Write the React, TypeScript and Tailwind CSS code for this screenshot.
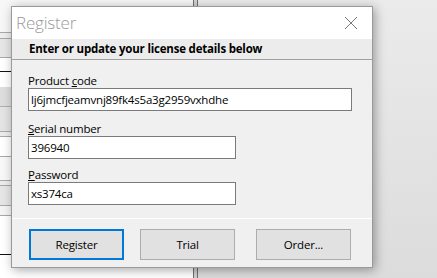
import { ReactNode } from "react";

// background rows of the window behind the dialog (left strip)
const bgRows = [
  { h: 33, cls: "bg-[#f7f7f7] border-b border-[#a8a8a8]" },
  { h: 6, cls: "bg-[#ededed] border-b border-[#a8a8a8]" },
  { h: 19, cls: "bg-[#e6e6e6] border-b border-[#a8a8a8]" },
  { h: 14, cls: "bg-white border-b border-[#111]" },
  { h: 15, cls: "bg-white" },
  { h: 20, cls: "bg-[#dedede] border-b border-[#b0b0b0]" },
  { h: 25, cls: "bg-[#e4e4e4] border-b border-[#a8a8a8]" },
  { h: 5, cls: "bg-[#ececec] border-b border-[#a8a8a8]" },
  { h: 20, cls: "bg-white border-b border-[#a8a8a8]" },
  { h: 24, cls: "bg-[#f8f8f8] border-b border-[#a8a8a8]" },
  { h: 5, cls: "bg-[#ececec] border-b border-[#a8a8a8]" },
  { h: 20, cls: "bg-[#e6e6e6] border-b border-[#a8a8a8]" },
  { h: 10, cls: "bg-[#f4f4f4] border-b border-[#a8a8a8]" },
  { h: 21, cls: "bg-white" },
  { h: 18, cls: "bg-white border-b border-[#111]" },
];

function Field({
  label,
  value,
  wide,
  className,
}: {
  label: ReactNode;
  value: string;
  wide?: boolean;
  className?: string;
}) {
  return (
    <div className={className}>
      <div className="h-[15px] leading-[15px] text-[11.5px] tracking-[-0.2px] text-black">{label}</div>
      <div
        className={`h-[23px] border border-[#7a7a7a] bg-white px-[2px] text-[11.5px] leading-[21px] tracking-[-0.2px] text-black ${
          wide ? "w-[324px]" : "w-[208px]"
        }`}
      >
        {value}
      </div>
    </div>
  );
}

function Btn({ children, primary }: { children: ReactNode; primary?: boolean }) {
  return (
    <button
      className={`h-[31px] w-[95px] bg-[#e1e1e1] text-[11.5px] tracking-[-0.2px] text-black ${
        primary ? "border-2 border-[#0078d7]" : "border border-[#adadad]"
      }`}
    >
      {children}
    </button>
  );
}

export default function App() {
  return (
    <div
      className="relative h-[278px] w-[437px] overflow-hidden bg-[#e4e4e4]"
      style={{ fontFamily: '"Open Sans", "Noto Sans", sans-serif' }}
    >
      {/* window behind */}
      <div className="flex h-full">
        <div className="flex w-[193px] flex-col">
          {bgRows.map((r, i) => (
            <div key={i} className={`shrink-0 ${r.cls}`} style={{ height: r.h }} />
          ))}
          <div className="flex-1 bg-white" />
        </div>
        <div className="w-[5px] border-x border-[#6f6f6f] bg-[#d0d0d0]" />
        <div className="flex-1 bg-gradient-to-b from-[#ebebeb] to-[#dcdcdc]" />
      </div>

      {/* dialog */}
      <div className="absolute left-[11px] top-[6px] flex h-[262px] w-[362px] flex-col border border-[#9a9a9a] bg-[#f0f0f0] shadow-[2px_2px_10px_rgba(0,0,0,0.35)]">
        <div className="flex h-[32px] shrink-0 items-center justify-between bg-white pl-[4px] pr-[14px]">
          <span className="text-[17px] font-light tracking-[-0.2px] text-[#9a9a9a]">Register</span>
          <svg width="14" height="14" viewBox="0 0 14 14">
            <path d="M1 1L13 13M13 1L1 13" stroke="#7a7a7a" strokeWidth="1" fill="none" />
          </svg>
        </div>
        <div className="flex h-[21px] shrink-0 items-center border-b border-[#a0a0a0] bg-[#ececec] pl-[17px] text-[11.5px] font-bold tracking-[-0.2px] text-black">
          Enter or update your license details below
        </div>
        <div className="flex flex-1 flex-col px-[16px] pt-[13px]">
          <Field
            wide
            label={
              <>
                Product <span className="underline">c</span>ode
              </>
            }
            value="lj6jmcfjeamvnj89fk4s5a3g2959vxhdhe"
          />
          <Field
            className="mt-[10px]"
            label={
              <>
                <span className="underline">S</span>erial number
              </>
            }
            value="396940"
          />
          <Field
            className="mt-[8px]"
            label={
              <>
                <span className="underline">P</span>assword
              </>
            }
            value="xs374ca"
          />
        </div>
        <div className="h-px shrink-0 bg-white" />
        <div className="flex h-[48px] shrink-0 items-start pl-[17px] pt-[10px]">
          <Btn primary>Register</Btn>
          <div className="ml-[16px]">
            <Btn>Trial</Btn>
          </div>
          <div className="ml-[21px]">
            <Btn>Order...</Btn>
          </div>
        </div>
      </div>
    </div>
  );
}
